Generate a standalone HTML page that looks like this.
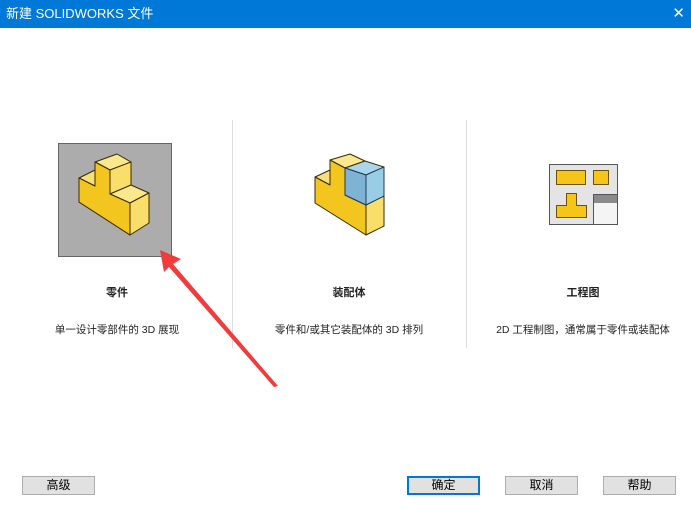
<!DOCTYPE html>
<html><head><meta charset="utf-8"><style>
body{margin:0;width:691px;height:515px;background:#fff;position:relative;overflow:hidden;font-family:"Liberation Sans","Noto Sans CJK SC",sans-serif;}
.title{position:absolute;left:0;top:0;width:691px;height:28px;background:#0078d7;color:#fff;font-size:13px;line-height:28px;}
.title span{position:absolute;left:6px;}
.title b{position:absolute;right:6px;font-weight:normal;font-size:15px;}
.sep{position:absolute;top:120px;width:1px;height:228px;background:#ddd;}
.lab{position:absolute;width:234px;text-align:center;font-size:11px;color:#222;}
.btn{position:absolute;top:476px;height:19px;background:#e1e1e1;border:1px solid #adadad;box-sizing:border-box;font-size:12px;text-align:center;line-height:17px;color:#000;}
</style></head><body>
<div class="title"><span>新建 SOLIDWORKS 文件</span><b>✕</b></div>
<div class="sep" style="left:232px"></div>
<div class="sep" style="left:466px"></div>
<div style="position:absolute;left:58px;top:143px;width:112px;height:112px;background:#acacac;border:1px solid #666;"></div>
<svg width="691" height="515" style="position:absolute;left:0;top:0" stroke="#3a2a00" stroke-width="1" stroke-linejoin="round">
<!-- part -->
<polygon points="79,178 95,170 95,202 79,202" fill="#f6e07a"/>
<polygon points="79,178 95,186 95,210 130,233 130,235 79,202" fill="#f3c51f"/>
<polygon points="95,162 117,154 131,162 110,170" fill="#fbe78c"/>
<polygon points="110,170 131,162 131,185 110,194" fill="#f9df6a"/>
<polygon points="95,162 110,170 110,194 95,186" fill="#f3c51f"/>
<polygon points="110,194 131,185 149,193 130,203" fill="#fbe78c"/>
<polygon points="130,203 149,193 149,223 130,235" fill="#f9df6a"/>
<polygon points="79,178 95,186 95,162 110,170 110,194 130,203 130,235 79,202" fill="#f3c51f"/>
<!-- assembly -->
<polygon points="315,177 330,170 345,178 330,185" fill="#f6e07a"/>
<polygon points="330,160 350,154 365,161 345,168" fill="#fbe78c"/>
<polygon points="315,177 330,185 330,160 345,168 345,195 366,205 366,235 315,203" fill="#f3c51f"/>
<polygon points="366,205 384,196 384,226 366,235" fill="#f9df6a"/>
<polygon points="345,168 365,161 384,167 366,175" fill="#a9d6ec"/>
<polygon points="345,168 366,175 366,205 345,195" fill="#7fb3d4" stroke="#1c3a5a"/>
<polygon points="366,175 384,167 384,196 366,205" fill="#99cde6" stroke="#1c3a5a"/>
<!-- drawing -->
<rect x="549.5" y="164.5" width="68" height="60" fill="#e4e4e4" stroke="#555"/>
<g fill="#f5c518" stroke="#6a5200">
<rect x="556.5" y="170.5" width="29" height="14"/>
<rect x="593.5" y="170.5" width="15" height="14"/>
<polygon points="566.5,193.5 576.5,193.5 576.5,205.5 586.5,205.5 586.5,217.5 556.5,217.5 556.5,205.5 566.5,205.5"/>
</g>
<rect x="593.5" y="194.5" width="24" height="30" fill="#f4f4f4" stroke="#555"/>
<rect x="594" y="195" width="23" height="8" fill="#8a8a8a" stroke="none"/>
<!-- arrow -->
<polygon points="160,250 181,259 173,264 278,386 274,387 169,267 164,272" fill="#f03c3c" stroke="none"/>
</svg>
<div class="lab" style="left:0;top:284px;font-weight:bold">零件</div>
<div class="lab" style="left:0;top:322px;font-size:10.5px">单一设计零部件的 3D 展现</div>
<div class="lab" style="left:232px;top:284px;font-weight:bold">装配体</div>
<div class="lab" style="left:232px;top:322px;font-size:10.5px">零件和/或其它装配体的 3D 排列</div>
<div class="lab" style="left:466px;top:284px;font-weight:bold">工程图</div>
<div class="lab" style="left:466px;top:322px;font-size:10.5px">2D 工程制图，通常属于零件或装配体</div>
<div class="btn" style="left:22px;width:73px">高级</div>
<div class="btn" style="left:407px;width:73px;border:2px solid #0078d7;line-height:15px">确定</div>
<div class="btn" style="left:505px;width:73px">取消</div>
<div class="btn" style="left:603px;width:73px">帮助</div>
</body></html>
